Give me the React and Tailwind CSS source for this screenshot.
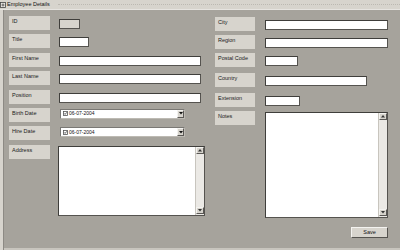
import React from 'react';

const FONT = { fontFamily: '"Liberation Sans", Arial, sans-serif' };

const Label = ({ text, w = 'w-[41px]' }) => (
  <div className={`${w} h-[14px] shrink-0 bg-[#d7d4cd] pl-[3px] pt-[1px] text-[5.5px] leading-[8px] text-[#1a1a1a]`}>
    {text}
  </div>
);

const Input = ({ w, grey }) => (
  <div className={`${w} h-[10px] mt-[3px] border border-[#55534f] border-t-[#3f3e3b] border-l-[#3f3e3b] ${grey ? 'bg-[#d7d4cd]' : 'bg-white'}`} />
);

const DatePick = () => (
  <div className="w-[125px] h-[10px] mt-[1px] ml-[1px] flex items-center bg-white border border-[#7a7874] border-b-[#bdbab3] border-r-[#bdbab3]">
    <svg width="5" height="5" viewBox="0 0 5 5" className="ml-[2px] shrink-0">
      <rect x="0.5" y="0.5" width="4" height="4" fill="white" stroke="#555" strokeWidth="0.8" />
      <path d="M1.2 2.4 L2.1 3.4 L3.8 1.3" stroke="#222" strokeWidth="0.7" fill="none" />
    </svg>
    <span className="ml-[1px] text-[5px] leading-none text-[#111]">06-07-2004</span>
    <div className="ml-auto w-[7px] h-[8px] bg-[#d7d4cd] border border-[#f4f3f0] border-b-[#5a5855] border-r-[#5a5855] flex items-center justify-center">
      <svg width="4" height="3" viewBox="0 0 4 3">
        <path d="M0 0 H4 L2 2.5 Z" fill="#111" />
      </svg>
    </div>
  </div>
);

const ScrollBtn = ({ up }) => (
  <div className="w-[8px] h-[7px] bg-[#d7d4cd] border border-[#f4f3f0] border-b-[#5a5855] border-r-[#5a5855] flex items-center justify-center">
    <svg width="4" height="3" viewBox="0 0 4 3">
      <path d={up ? 'M0 2.5 H4 L2 0 Z' : 'M0 0 H4 L2 2.5 Z'} fill="#333" />
    </svg>
  </div>
);

const TextArea = ({ w, h }) => (
  <div className={`${w} ${h} mt-[1px] flex bg-white border border-[#55534f] border-t-[#3f3e3b] border-l-[#3f3e3b]`}>
    <div className="flex-1" />
    <div className="w-[9px] flex flex-col justify-between bg-[#ebe9e5] border-l border-[#c8c5be] pb-[1px]">
      <ScrollBtn up />
      <ScrollBtn />
    </div>
  </div>
);

const Row = ({ children, className = '' }) => (
  <div className={`flex items-start ${className}`}>{children}</div>
);

export default function App() {
  return (
    <div className="w-[400px] h-[250px] overflow-hidden bg-[#a6a39c] flex flex-col" style={FONT}>
      <div className="h-[9px] shrink-0 bg-[#d7d4cd] flex items-center">
        <svg width="6" height="8" viewBox="0 0 6 8" className="shrink-0">
          <rect x="0.5" y="1.5" width="5" height="5" fill="#e8e6e2" stroke="#444" strokeWidth="0.8" />
          <path d="M3 2.5 V5.5 M1.5 4 H4.5" stroke="#333" strokeWidth="0.7" />
        </svg>
        <span className="ml-[1px] text-[5.5px] leading-none text-[#111]">Employee Details</span>
        <div className="ml-[8px] flex-1 h-[2px] border-t border-dotted border-[#bcb9b2]" />
      </div>
      <div className="h-[1px] shrink-0 bg-[#e6e4e0]" />
      <div className="flex-1 flex">
        <div className="w-[4px] shrink-0 bg-[#d7d4cd] border-r border-[#8d8a84]" />
        <div className="flex-1 flex flex-col border-b-2 border-[#c8c5be]">
          <div className="flex">
            <div className="w-[206px] shrink-0 pl-[5px] pt-[6px] flex flex-col gap-[4.4px]">
              <Row className="gap-[9px]"><Label text="ID" /><Input w="w-[21px]" grey /></Row>
              <Row className="gap-[9px]"><Label text="Title" /><Input w="w-[30px]" /></Row>
              <Row className="gap-[9px]"><Label text="First Name" /><Input w="w-[142px]" /></Row>
              <Row className="gap-[9px]"><Label text="Last Name" /><Input w="w-[142px]" /></Row>
              <Row className="gap-[9px]"><Label text="Position" /><Input w="w-[142px]" /></Row>
              <Row className="gap-[9px]"><Label text="Birth Date" /><DatePick /></Row>
              <Row className="gap-[9px]"><Label text="Hire Date" /><DatePick /></Row>
              <Row className="gap-[8px]"><Label text="Address" /><TextArea w="w-[147px]" h="h-[70px]" /></Row>
            </div>
            <div className="flex-1 pl-[5px] pt-[7px] flex flex-col">
              <Row className="gap-[10px]"><Label text="City" w="w-[40px]" /><Input w="w-[123px]" /></Row>
              <Row className="gap-[10px] mt-[4px]"><Label text="Region" w="w-[40px]" /><Input w="w-[123px]" /></Row>
              <Row className="gap-[10px] mt-[4px]"><Label text="Postal Code" w="w-[40px]" /><Input w="w-[33px]" /></Row>
              <Row className="gap-[10px] mt-[6px]"><Label text="Country" w="w-[40px]" /><Input w="w-[102px]" /></Row>
              <Row className="gap-[10px] mt-[6px]"><Label text="Extension" w="w-[40px]" /><Input w="w-[35px]" /></Row>
              <Row className="gap-[10px] mt-[4px]"><Label text="Notes" w="w-[40px]" /><TextArea w="w-[123px]" h="h-[106px]" /></Row>
              <div className="flex justify-end pr-[12px] mt-[9px]">
                <button className="w-[37px] h-[11px] bg-[#d7d4cd] border border-[#f4f3f0] border-b-[#55534f] border-r-[#55534f] text-[5.5px] leading-none text-[#111]">
                  Save
                </button>
              </div>
            </div>
          </div>
        </div>
      </div>
    </div>
  );
}
